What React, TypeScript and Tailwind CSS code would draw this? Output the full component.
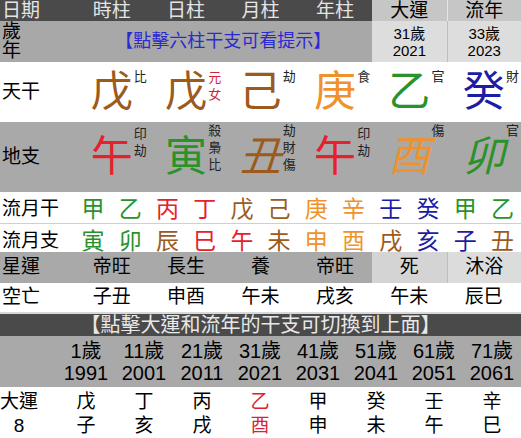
import React from "react";

const BROWN = "text-[#9c5a1c]";
const ORANGE = "text-[#f0922c]";
const GREEN = "text-[#2a922a]";
const BLUE = "text-[#1c1ca4]";
const RED = "text-[#e6202c]";

type Pillar = {
  ch: string;
  color: string;
  italic?: boolean;
  sup: string[];
  supRed?: boolean;
  supTop: string;
};

const stems: Pillar[] = [
  { ch: "戊", color: BROWN, sup: ["比"], supTop: "top-[6px]" },
  { ch: "戊", color: BROWN, sup: ["元", "女"], supRed: true, supTop: "top-[7px]" },
  { ch: "己", color: BROWN, sup: ["劫"], supTop: "top-[6px]" },
  { ch: "庚", color: ORANGE, sup: ["食"], supTop: "top-[6px]" },
  { ch: "乙", color: GREEN, sup: ["官"], supTop: "top-[6px]" },
  { ch: "癸", color: BLUE, sup: ["財"], supTop: "top-[6px]" },
];

const branches: Pillar[] = [
  { ch: "午", color: RED, sup: ["印", "劫"], supTop: "top-[3px]" },
  { ch: "寅", color: GREEN, sup: ["殺", "梟", "比"], supTop: "top-[0px]" },
  { ch: "丑", color: BROWN, italic: true, sup: ["劫", "財", "傷"], supTop: "top-[0px]" },
  { ch: "午", color: RED, sup: ["印", "劫"], supTop: "top-[3px]" },
  { ch: "酉", color: ORANGE, italic: true, sup: ["傷"], supTop: "top-[0px]" },
  { ch: "卯", color: GREEN, italic: true, sup: ["官"], supTop: "top-[0px]" },
];

const monthStems: [string, string][] = [
  ["甲", GREEN], ["乙", GREEN], ["丙", RED], ["丁", RED], ["戊", BROWN], ["己", BROWN],
  ["庚", ORANGE], ["辛", ORANGE], ["壬", BLUE], ["癸", BLUE], ["甲", GREEN], ["乙", GREEN],
];
const monthBranches: [string, string][] = [
  ["寅", GREEN], ["卯", GREEN], ["辰", BROWN], ["巳", RED], ["午", RED], ["未", BROWN],
  ["申", ORANGE], ["酉", ORANGE], ["戌", BROWN], ["亥", BLUE], ["子", BLUE], ["丑", BROWN],
];

const luck = [
  { age: "1歲", year: "1991", s: "戊", b: "子" },
  { age: "11歲", year: "2001", s: "丁", b: "亥" },
  { age: "21歲", year: "2011", s: "丙", b: "戌" },
  { age: "31歲", year: "2021", s: "乙", b: "酉", red: true },
  { age: "41歲", year: "2031", s: "甲", b: "申" },
  { age: "51歲", year: "2041", s: "癸", b: "未" },
  { age: "61歲", year: "2051", s: "壬", b: "午" },
  { age: "71歲", year: "2061", s: "辛", b: "巳" },
];

function BigCell({ p, rowH }: { p: Pillar; rowH: string }) {
  return (
    <div className={`relative flex items-center justify-center ${rowH}`}>
      <span className={`text-[42px] leading-none ${p.color} ${p.italic ? "italic" : ""}`}>{p.ch}</span>
      <div
        className={`absolute right-[2px] ${p.supTop} flex flex-col text-[13px] leading-[17px] ${
          p.supRed ? "text-[#d4203c]" : "text-[#222]"
        }`}
      >
        {p.sup.map((s, i) => (
          <span key={i}>{s}</span>
        ))}
      </div>
    </div>
  );
}

export default function App() {
  return (
    <div className="w-[521px] h-[438px] overflow-hidden bg-white text-black font-['Liberation_Sans','Noto_Sans_CJK_TC',sans-serif]">
      {/* header */}
      <div className="grid grid-cols-7 h-[21px] text-[19px] leading-[21px]">
        <div className="bg-[#4a4a4a] text-[#e4e4e4] pl-[2px]">日期</div>
        {["時柱", "日柱", "月柱", "年柱"].map((t) => (
          <div key={t} className="bg-[#4a4a4a] text-[#e4e4e4] text-center">{t}</div>
        ))}
        <div className="bg-[#c6c6c6] text-center">大運</div>
        <div className="bg-[#c6c6c6] text-center border-l border-[#e6e6e6]">流年</div>
      </div>
      {/* age row */}
      <div className="grid grid-cols-7 h-[41px]">
        <div className="bg-[#a8a8a8] pl-[2px] text-[19px] leading-[19px] pt-[1px] flex flex-col">
          <span>歲</span>
          <span>年</span>
        </div>
        <div className="col-span-4 bg-[#a8a8a8] flex items-center justify-center text-[18px] text-[#2a2ad0]">
          【點擊六柱干支可看提示】
        </div>
        <div className="bg-[#dddddd] flex flex-col items-center justify-center text-[15px] leading-[17px]">
          <span>31歲</span>
          <span>2021</span>
        </div>
        <div className="bg-[#dddddd] border-l border-[#bdbdbd] flex flex-col items-center justify-center text-[15px] leading-[17px]">
          <span>33歲</span>
          <span>2023</span>
        </div>
      </div>
      {/* heavenly stems */}
      <div className="grid grid-cols-7 h-[60px] bg-white">
        <div className="flex items-center pl-[2px] text-[19px]">天干</div>
        {stems.map((p, i) => (
          <BigCell key={i} p={p} rowH="h-[60px]" />
        ))}
      </div>
      {/* earthly branches */}
      <div className="grid grid-cols-7 h-[70px] bg-[#a9a9a9]">
        <div className="flex items-center pl-[2px] text-[19px]">地支</div>
        {branches.map((p, i) => (
          <BigCell key={i} p={p} rowH="h-[70px]" />
        ))}
      </div>
      {/* monthly */}
      <div className="grid grid-cols-[2fr_repeat(12,minmax(0,1fr))] h-[31px] items-center">
        <div className="pl-[2px] text-[19px]">流月干</div>
        {monthStems.map(([c, col], i) => (
          <div key={i} className={`text-center text-[23px] ${col}`}>{c}</div>
        ))}
      </div>
      <div className="h-px bg-[#d0d0d0]" />
      <div className="grid grid-cols-[2fr_repeat(12,minmax(0,1fr))] h-[28px] items-center">
        <div className="pl-[2px] text-[19px]">流月支</div>
        {monthBranches.map(([c, col], i) => (
          <div key={i} className={`text-center text-[23px] ${col}`}>{c}</div>
        ))}
      </div>
      {/* star luck */}
      <div className="grid grid-cols-7 h-[31px] text-[19px] items-stretch">
        <div className="bg-[#a9a9a9] flex items-center pl-[2px]">星運</div>
        {["帝旺", "長生", "養", "帝旺"].map((t, i) => (
          <div key={i} className="bg-[#a9a9a9] flex items-center justify-center">{t}</div>
        ))}
        <div className="bg-[#d4d4d4] flex items-center justify-center">死</div>
        <div className="bg-[#dcdcdc] border-l border-[#bdbdbd] flex items-center justify-center">沐浴</div>
      </div>
      <div className="grid grid-cols-7 h-[29px] text-[19px] items-center">
        <div className="pl-[2px]">空亡</div>
        {["子丑", "申酉", "午未", "戌亥", "午未", "辰巳"].map((t, i) => (
          <div key={i} className="text-center">{t}</div>
        ))}
      </div>
      <div className="h-[2px] bg-[#d8d8d8]" />
      {/* luck header bar */}
      <div className="h-[22px] bg-[#4a4a4a] text-[#e8e8e8] text-[20px] leading-[22px] text-center">
        【點擊大運和流年的干支可切換到上面】
      </div>
      {/* ages */}
      <div className="grid grid-cols-[57px_repeat(8,58px)] h-[51px] bg-[#a9a9a9] text-[20px] leading-[22px] items-center">
        <div />
        {luck.map((l, i) => (
          <div key={i} className="flex flex-col items-center">
            <span>{l.age}</span>
            <span>{l.year}</span>
          </div>
        ))}
      </div>
      {/* luck pillars */}
      <div className="grid grid-cols-[57px_repeat(8,58px)] h-[51px] text-[19px] leading-[24px] pt-[3px]">
        <div className="flex flex-col items-center w-[38px]">
          <span>大運</span>
          <span>8</span>
        </div>
        {luck.map((l, i) => (
          <div key={i} className={`flex flex-col items-center ${l.red ? "text-[#e02030]" : ""}`}>
            <span>{l.s}</span>
            <span>{l.b}</span>
          </div>
        ))}
      </div>
    </div>
  );
}
